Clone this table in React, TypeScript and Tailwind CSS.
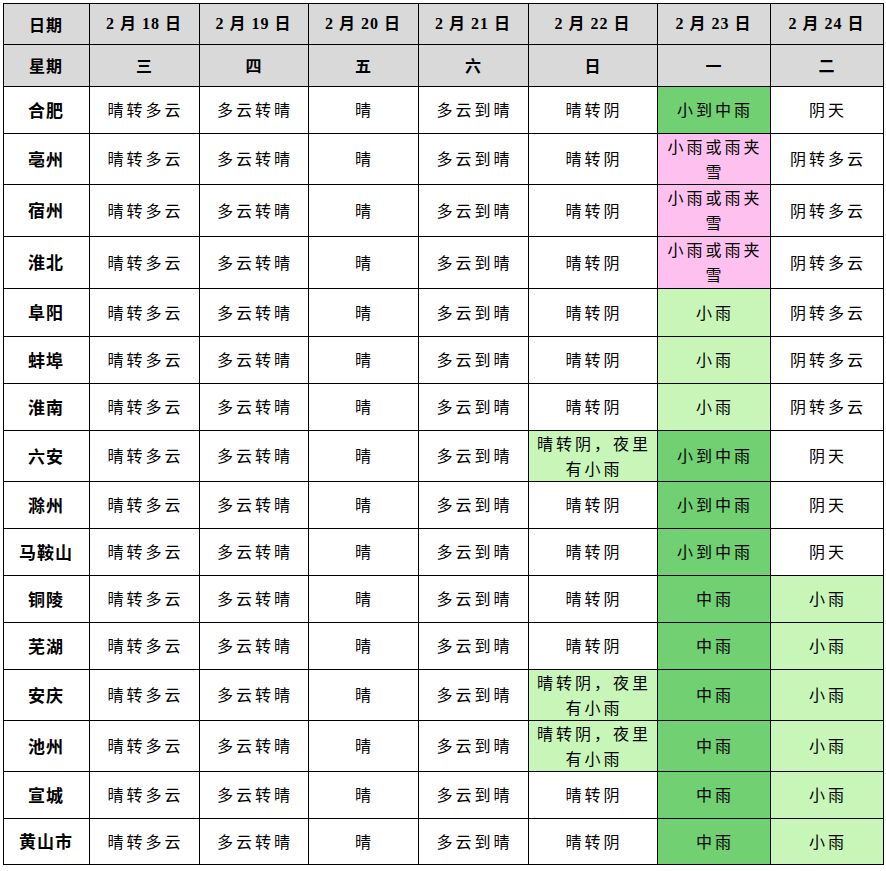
import React from 'react';

type Tone = 'dark' | 'light' | 'pink' | undefined;

const dates = ['2 月 18 日', '2 月 19 日', '2 月 20 日', '2 月 21 日', '2 月 22 日', '2 月 23 日', '2 月 24 日'];
const weekdays = ['三', '四', '五', '六', '日', '一', '二'];
const widths = ['w-[86px]', 'w-[110px]', 'w-[109px]', 'w-[110px]', 'w-[110px]', 'w-[129px]', 'w-[113px]', 'w-[113px]'];

const EVENING = '晴转阴，夜里有小雨';
const MIX = '小雨或雨夹雪';

// [city, 22日, 22日 tone, 23日, 23日 tone, 24日, 24日 tone, row height]
const rows: [string, string, Tone, string, Tone, string, Tone, string][] = [
  ['合肥', '晴转阴', undefined, '小到中雨', 'dark', '阴天', undefined, 'h-[47px]'],
  ['亳州', '晴转阴', undefined, MIX, 'pink', '阴转多云', undefined, 'h-[51px]'],
  ['宿州', '晴转阴', undefined, MIX, 'pink', '阴转多云', undefined, 'h-[52px]'],
  ['淮北', '晴转阴', undefined, MIX, 'pink', '阴转多云', undefined, 'h-[52px]'],
  ['阜阳', '晴转阴', undefined, '小雨', 'light', '阴转多云', undefined, 'h-[48px]'],
  ['蚌埠', '晴转阴', undefined, '小雨', 'light', '阴转多云', undefined, 'h-[47px]'],
  ['淮南', '晴转阴', undefined, '小雨', 'light', '阴转多云', undefined, 'h-[47px]'],
  ['六安', EVENING, 'light', '小到中雨', 'dark', '阴天', undefined, 'h-[51px]'],
  ['滁州', '晴转阴', undefined, '小到中雨', 'dark', '阴天', undefined, 'h-[47px]'],
  ['马鞍山', '晴转阴', undefined, '小到中雨', 'dark', '阴天', undefined, 'h-[47px]'],
  ['铜陵', '晴转阴', undefined, '中雨', 'dark', '小雨', 'light', 'h-[47px]'],
  ['芜湖', '晴转阴', undefined, '中雨', 'dark', '小雨', 'light', 'h-[47px]'],
  ['安庆', EVENING, 'light', '中雨', 'dark', '小雨', 'light', 'h-[51px]'],
  ['池州', EVENING, 'light', '中雨', 'dark', '小雨', 'light', 'h-[51px]'],
  ['宣城', '晴转阴', undefined, '中雨', 'dark', '小雨', 'light', 'h-[47px]'],
  ['黄山市', '晴转阴', undefined, '中雨', 'dark', '小雨', 'light', 'h-[46px]'],
];

const toneBg = (t: Tone) =>
  t === 'dark' ? 'bg-[#70d072]' : t === 'light' ? 'bg-[#c7f6b8]' : t === 'pink' ? 'bg-[#fec1ef]' : 'bg-white';

const Cell: React.FC<{ text: string; tone?: Tone }> = ({ text, tone }) => (
  <td className={`border border-black px-0 py-0 text-center align-middle ${toneBg(tone)}`}>
    <span className="inline-block pl-[3px] tracking-[3px] leading-[25px]">{text}</span>
  </td>
);

export default function App() {
  return (
    <div className="bg-white p-[2.5px] text-black [font-family:'Noto_Sans_CJK_SC',sans-serif]">
      <table className="table-fixed border-collapse w-[880px] text-[16px]">
        <colgroup>
          {widths.map((w, i) => (
            <col key={i} className={w} />
          ))}
        </colgroup>
        <thead>
          <tr className="h-[41px] bg-[#d9d9d9]">
            <th className="border border-black font-bold text-[16px] tracking-[1px] text-center">日期</th>
            {dates.map((d) => (
              <th
                key={d}
                className="border border-black font-bold text-[16px] tracking-[1px] text-center [font-family:'Liberation_Serif','Noto_Sans_CJK_SC',serif]"
              >
                {d}
              </th>
            ))}
          </tr>
          <tr className="h-[42px] bg-[#d9d9d9]">
            <th className="border border-black font-bold text-[16px] tracking-[1px] text-center">星期</th>
            {weekdays.map((w) => (
              <th key={w} className="border border-black font-bold text-[16px] text-center">
                {w}
              </th>
            ))}
          </tr>
        </thead>
        <tbody>
          {rows.map(([city, d22, t22, d23, t23, d24, t24, h]) => (
            <tr key={city} className={h}>
              <td className="border border-black bg-white text-center font-bold text-[17px] tracking-[1px]">{city}</td>
              <Cell text="晴转多云" />
              <Cell text="多云转晴" />
              <Cell text="晴" />
              <Cell text="多云到晴" />
              <Cell text={d22} tone={t22} />
              <Cell text={d23} tone={t23} />
              <Cell text={d24} tone={t24} />
            </tr>
          ))}
        </tbody>
      </table>
    </div>
  );
}
